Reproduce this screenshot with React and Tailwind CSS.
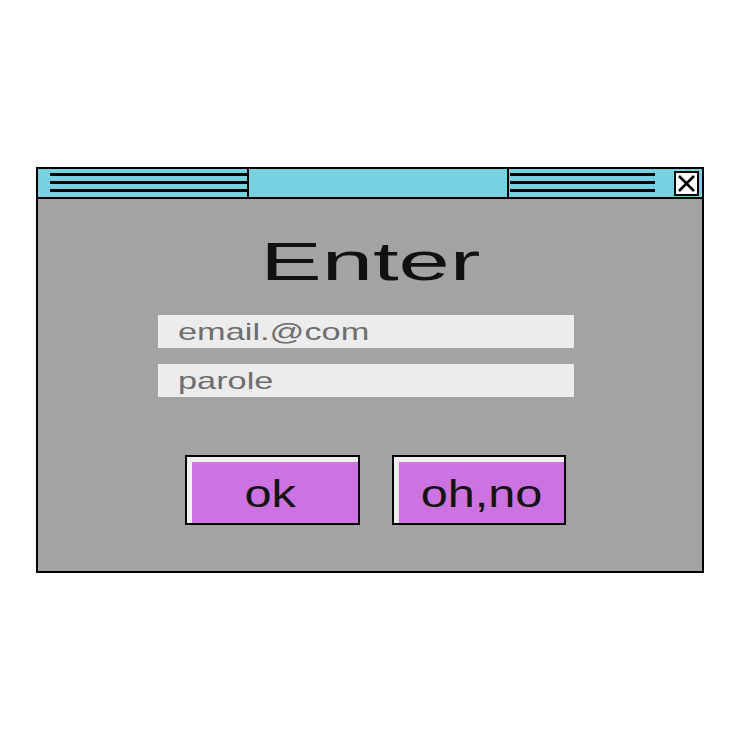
const sans = { fontFamily: '"Liberation Sans", Arial, sans-serif' };

// three stacked rules used on both sides of the title bar
const Grip = ({ className = '' }) => (
  <div className={`flex flex-col gap-[5px] pt-[4px] ${className}`}>
    <div className="h-[3px] bg-black" />
    <div className="h-[3px] bg-black" />
    <div className="h-[3px] bg-black" />
  </div>
);

const Field = ({ label }) => (
  <div className="w-[416px] h-[33px] bg-[#ececec] pl-[20px] flex items-center overflow-hidden">
    <span className="inline-block origin-left scale-x-[1.43] text-[24px] leading-none text-[#6e6e6e]">
      {label}
    </span>
  </div>
);

const Button = ({ label, width, pad = '' }) => (
  <button className={`${width} h-[70px] border-2 border-black bg-[#f1eef2] pt-[5px] pl-[5px] flex`}>
    <span className={`flex-1 bg-[#cc73e1] flex items-center justify-center pt-[2px] ${pad}`}>
      <span className="inline-block scale-x-[1.28] text-[38px] leading-none text-[#141414]">
        {label}
      </span>
    </span>
  </button>
);

export default function App() {
  return (
    <div className="w-full h-[740px] bg-white flex items-center justify-center" style={sans}>
      <div className="w-[668px] h-[406px] border-2 border-black bg-[#a3a3a3] flex flex-col">
        {/* title bar */}
        <div className="h-[30px] border-b-2 border-black bg-[#76d2e1] flex shrink-0">
          <Grip className="w-[211px] pl-[12px] border-r-2 border-black" />
          <div className="w-[260px] border-r-2 border-black" />
          <div className="flex-1 flex pl-[1px]">
            <Grip className="w-[145px]" />
            <div className="ml-auto mr-[3px] mt-[2px] w-[25px] h-[25px] border-2 border-black bg-white flex items-center justify-center">
              <svg width="19" height="19" viewBox="0 0 19 19">
                <path d="M2 2L17 17M17 2L2 17" stroke="black" strokeWidth="2.6" />
              </svg>
            </div>
          </div>
        </div>

        {/* body */}
        <div className="flex-1 flex flex-col">
          <div className="mt-[36px] h-[53px] text-center">
            <span className="inline-block scale-x-[1.74] text-[53px] leading-none text-[#111]">Enter</span>
          </div>

          <div className="mt-[27px] pl-[120px] flex flex-col gap-[16px]">
            <Field label="email.@com" />
            <Field label="parole" />
          </div>

          <div className="mt-[58px] pl-[147px] flex gap-[32px]">
            <Button label="ok" width="w-[175px]" pad="pr-[9px]" />
            <Button label="oh,no" width="w-[174px]" />
          </div>
        </div>
      </div>
    </div>
  );
}
